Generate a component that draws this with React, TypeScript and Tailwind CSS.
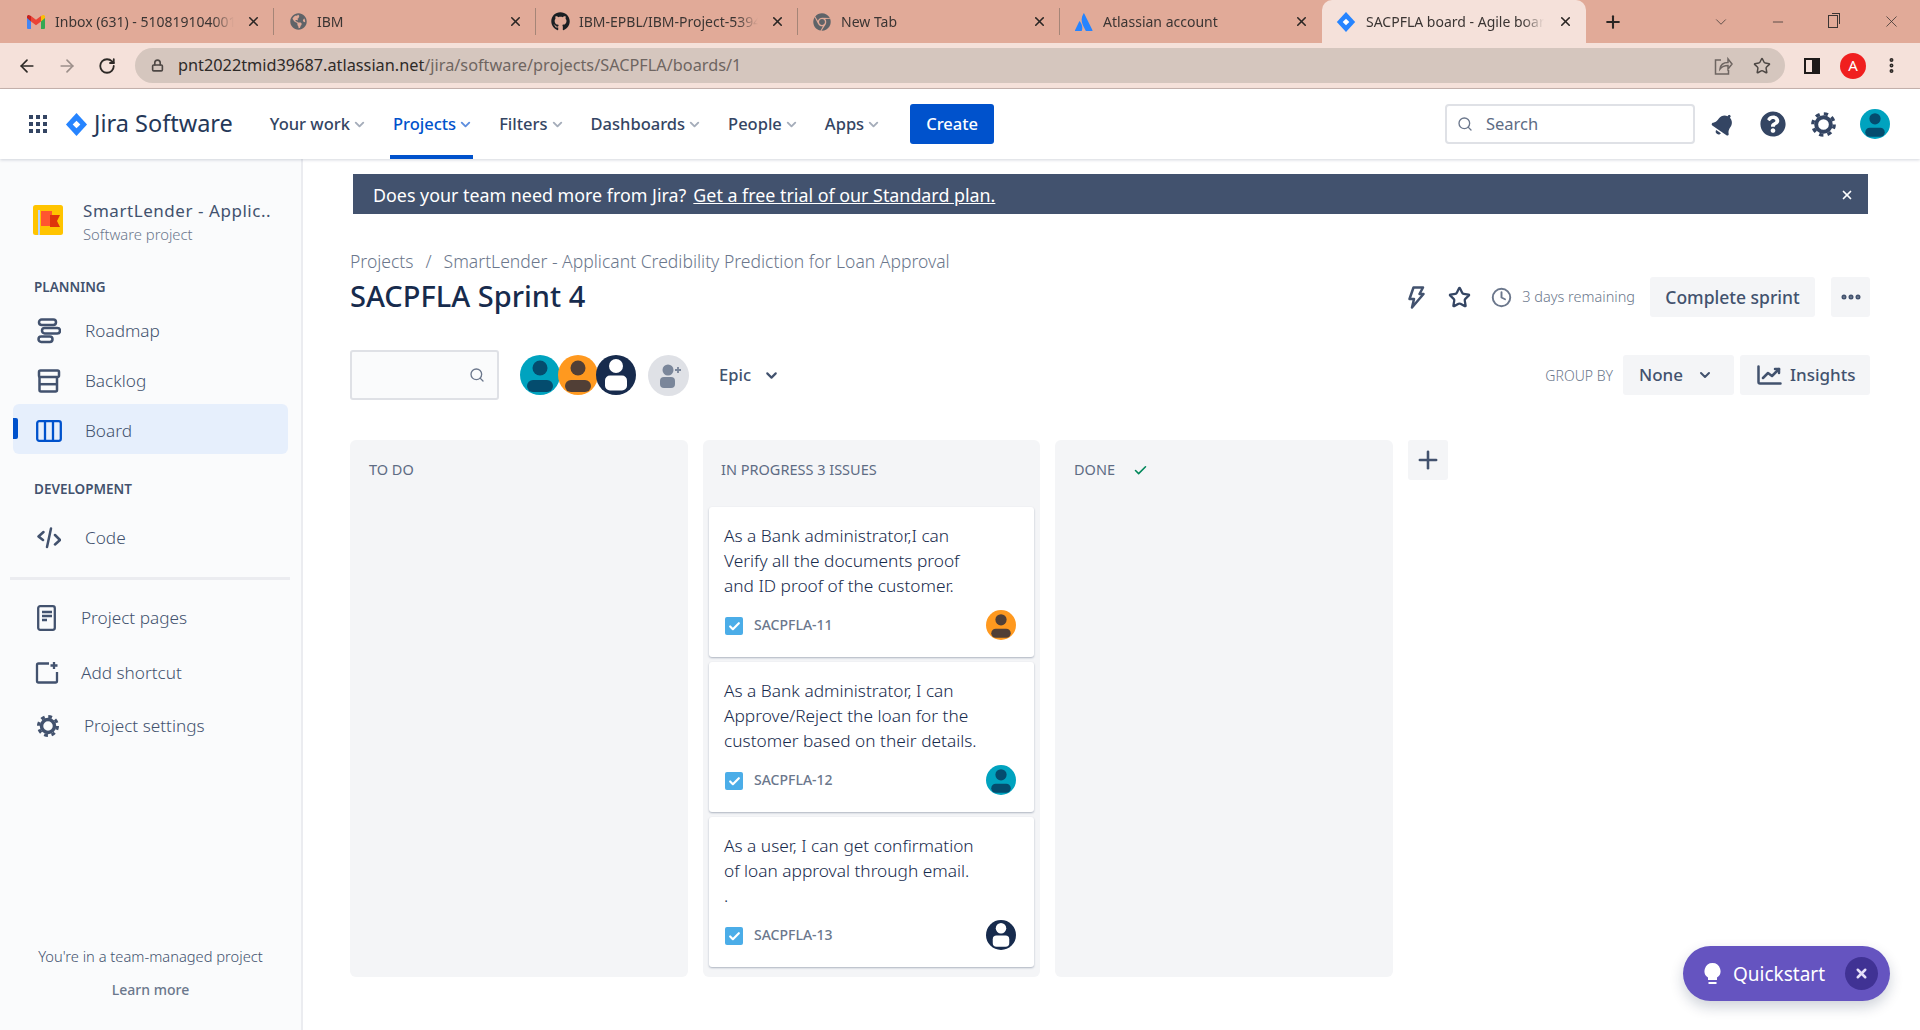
import React from 'react';
import { ArrowLeft, ArrowRight, ChevronDown, Clock, EllipsisVertical, Lock, Minus, MoreHorizontal, Plus, RotateCw, Search, Star, X, Check } from 'lucide-react';
import { FaBell, FaChrome, FaGithub, FaGlobeAmericas, FaQuestionCircle } from 'react-icons/fa';

const font = { fontFamily: '"Noto Sans", "Open Sans", sans-serif' };

const GmailIcon = () => (
  <svg width="18" height="14" viewBox="0 0 18 14">
    <path d="M0 2v11a1 1 0 0 0 1 1h3V6z" fill="#4285f4" />
    <path d="M18 2v11a1 1 0 0 1-1 1h-3V6z" fill="#34a853" />
    <path d="M14 1v5.500L18 3V1.500a1.500 1.500 0 0 0-2.400-1.200z" fill="#fbbc04" />
    <path d="M4 6.500V1l5 3.800L14 1v5.500L9 10.300z" fill="#ea4335" />
    <path d="M0 1.500V3l4 3.500V1L2.400.300A1.500 1.500 0 0 0 0 1.500z" fill="#c5221f" />
  </svg>
);

const AtlassianIcon = () => (
  <svg width="18" height="18" viewBox="0 0 18 18">
    <path d="M5 8.500c-.3-.3-.6-.3-.8.100L0 17.200c-.2.400 0 .8.500.8h5.800c.2 0 .4-.1.500-.3C8 15 7 11 5 8.500z" fill="#2684ff" />
    <path d="M8.500.500C6 4.500 6.200 8.500 8 12.400l2.700 5.300c.1.200.3.300.5.300h5.800c.4 0 .7-.4.500-.8L9.200.500C9 .1 8.700.1 8.500.500z" fill="#2684ff" />
  </svg>
);

const JiraDiamond = ({ size }: { size: number }) => (
  <svg width={size} height={size} viewBox="0 0 24 24">
    <path d="M12 0 23 12 12 24 1 12z" fill="#2684ff" />
    <path d="M12 8l4 4-4 4-4-4z" fill="#ffffff" />
  </svg>
);

const Gear = ({ size, color }: { size: number; color: string }) => (
  <svg width={size} height={size} viewBox="0 0 24 24" fill="none" stroke={color}>
    <circle cx="12" cy="12" r="6.500" strokeWidth="3.500" />
    <circle cx="12" cy="12" r="9.500" strokeWidth="3" strokeDasharray="3.800 3.660" />
  </svg>
);

const Avatar = ({ bg, fg, size }: { bg: string; fg: string; size: number }) => (
  <svg width={size} height={size} viewBox="0 0 40 40">
    <circle cx="20" cy="20" r="20" fill={bg} />
    <circle cx="20" cy="13" r="7.500" fill={fg} />
    <path d="M13 25h14a6 6 0 0 1 6 6v0a6 6 0 0 1-6 6H13a6 6 0 0 1-6-6v0a6 6 0 0 1 6-6z" fill={fg} />
  </svg>
);

const Teal = ({ size = 40 }: { size?: number }) => <Avatar bg="#00a3bf" fg="#044c6e" size={size} />;
const Orange = ({ size = 40 }: { size?: number }) => <Avatar bg="#ff991f" fg="#513f36" size={size} />;
const Navy = ({ size = 40 }: { size?: number }) => (
  <svg width={size} height={size} viewBox="0 0 40 40">
    <circle cx="20" cy="20" r="20" fill="#172b4d" />
    <circle cx="20" cy="11" r="7" fill="#ffffff" />
    <rect x="9" y="20.500" width="22" height="15" rx="5" fill="#ffffff" />
  </svg>
);

const tabs = [
  { title: 'Inbox (631) - 510819104001.', icon: <GmailIcon /> },
  { title: 'IBM', icon: <FaGlobeAmericas size={17} color="#5f6368" /> },
  { title: 'IBM-EPBL/IBM-Project-5394', icon: <FaGithub size={19} color="#1b1f23" /> },
  { title: 'New Tab', icon: <FaChrome size={18} color="#5f6368" /> },
  { title: 'Atlassian account', icon: <AtlassianIcon /> },
];

const navItems = ['Your work', 'Projects', 'Filters', 'Dashboards', 'People', 'Apps'];

const BrowserChrome = () => (
  <>
    <div className="flex h-[43px] items-stretch bg-[#e1aa98] pl-[12px]">
      {tabs.map((tab, i) => (
        <div key={tab.title} className={`relative flex w-[262px] items-center pl-[14px] ${i === 4 ? '' : 'border-r border-[#a58577]'} my-[8px]`}>
          <span className="flex w-[20px] justify-center">{tab.icon}</span>
          <span className="ml-[9px] w-[179px] overflow-hidden whitespace-nowrap text-[14px] text-[#3b3533] [mask-image:linear-gradient(to_right,black_88%,transparent)]">{tab.title}</span>
          <X size={15} strokeWidth={2.500} className="absolute left-[234px] text-[#2a2624]" />
        </div>
      ))}
      <div className="relative flex w-[264px] items-center rounded-t-[10px] bg-[#f5e1da] pl-[14px]">
        <JiraDiamond size={20} />
        <span className="ml-[10px] w-[178px] overflow-hidden whitespace-nowrap text-[14px] text-[#3b3533] [mask-image:linear-gradient(to_right,black_88%,transparent)]">SACPFLA board - Agile board</span>
        <X size={15} strokeWidth={2.500} className="absolute left-[236px] text-[#2a2624]" />
      </div>
      <div className="ml-[17px] flex items-center">
        <Plus size={20} strokeWidth={2.500} className="text-[#2a2624]" />
      </div>
      <div className="ml-auto flex items-center text-[#3b3533]">
        <ChevronDown size={18} strokeWidth={1} />
        <Minus size={16} strokeWidth={1.200} className="ml-[40px]" />
        <span className="relative ml-[42px] h-[13px] w-[10px] border border-[#3b3533] shadow-[2px_-2px_0_-1px_#e1aa98,3px_-3px_0_-1px_#3b3533]" />
        <X size={19} strokeWidth={1} className="ml-[44px] mr-[19px]" />
      </div>
    </div>
    <div className="flex h-[46px] items-center border-b border-[#c9b5ae] bg-[#f5e1da] pl-[17px]">
      <ArrowLeft size={20} className="text-[#2d2926]" />
      <ArrowRight size={20} className="ml-[20px] text-[#9c8f8a]" />
      <RotateCw size={18} strokeWidth={2.400} className="ml-[21px] text-[#2d2926]" />
      <div className="ml-[19px] flex h-[35px] w-[1650px] items-center rounded-full bg-[#d5c6be] pl-[16px]">
        <Lock size={13} strokeWidth={3} className="text-[#4d4744]" />
        <span className="ml-[14px] text-[16.300px]">
          <span className="text-[#2e2a28]">pnt2022tmid39687.atlassian.net</span>
          <span className="text-[#6e6561]">/jira/software/projects/SACPFLA/boards/1</span>
        </span>
        <svg width="20" height="20" viewBox="0 0 20 20" fill="none" stroke="#6e6561" strokeWidth="1.500" className="ml-auto">
          <path d="M8 4H2.500v14h13v-4" />
          <path d="M7 13c.5-4 3.500-6.500 8-6.500V3l4 5-4 5V9.500c-3 0-6 1-8 3.500z" />
        </svg>
        <Star size={18} className="ml-[20px] mr-[14px] text-[#4d4744]" />
      </div>
      <span className="ml-[19px] flex h-[16px] w-[16px] justify-end border-[2.500px] border-[#1d1a19]">
        <span className="h-full w-[6px] bg-[#1d1a19]" />
      </span>
      <span className="ml-[20px] flex h-[26px] w-[26px] items-center justify-center rounded-full bg-[#f01f1f] text-[15px] text-white">A</span>
      <EllipsisVertical size={19} strokeWidth={3} className="ml-[16px] text-[#2d2926]" />
    </div>
  </>
);

const TopNav = () => (
  <div className="relative z-10 flex h-[70px] items-center bg-white pl-[29px] pr-[30px] shadow-[0_1px_3px_rgba(9,30,66,0.18)]">
    <div className="grid h-[18px] w-[18px] grid-cols-3 gap-[3px]">
      {Array.from({ length: 9 }).map((_, i) => (
        <span key={i} className="bg-[#344563]" />
      ))}
    </div>
    <span className="ml-[18px]"><JiraDiamond size={23} /></span>
    <span className="ml-[6px] text-[23.500px] text-[#253858]">Jira Software</span>
    <div className="ml-[37px] flex h-full items-center gap-[26px]">
      {navItems.map((item) => {
        const active = item === 'Projects';
        return (
          <div key={item} className={`relative flex h-full items-center text-[16.500px] font-medium ${active ? 'text-[#0052cc]' : 'text-[#344563]'}`}>
            {item}
            <ChevronDown size={15} strokeWidth={3} className={`ml-[2px] ${active ? 'text-[#5e8ede]' : 'text-[#a5adba]'}`} />
            {active && <span className="absolute bottom-0 left-[-3px] right-0 h-[4px] bg-[#0052cc]" />}
          </div>
        );
      })}
    </div>
    <button className="ml-[29px] h-[40px] w-[84px] rounded-[3px] bg-[#0052cc] text-[16.500px] font-medium text-white">Create</button>
    <div className="ml-auto flex h-[40px] w-[250px] items-center rounded-[4px] border-2 border-[#dfe1e6] pl-[10px]">
      <Search size={16} className="text-[#6b778c]" />
      <span className="ml-[13px] text-[16.500px] text-[#5e6c84]">Search</span>
    </div>
    <FaBell size={23} className="ml-[17px] rotate-[35deg] text-[#344563]" />
    <FaQuestionCircle size={26} className="ml-[25px] text-[#344563]" />
    <span className="ml-[24px]"><Gear size={27} color="#344563" /></span>
    <span className="ml-[23px]"><Teal size={30} /></span>
  </div>
);

const RoadmapIcon = () => (
  <svg width="24" height="26" viewBox="0 0 24 26" fill="none" stroke="#42526e" strokeWidth="2.500">
    <rect x="2" y="1.500" width="17" height="5.500" rx="2.700" />
    <rect x="5" y="10" width="18" height="5.500" rx="2.700" />
    <rect x="1.500" y="18.500" width="14" height="5.500" rx="2.700" />
  </svg>
);

const BacklogIcon = () => (
  <svg width="24" height="24" viewBox="0 0 24 24" fill="none" stroke="#42526e" strokeWidth="2.500">
    <rect x="2" y="1.500" width="20" height="6.500" rx="1.500" />
    <path d="M2.500 8v13a1.500 1.500 0 0 0 1.500 1.500h14.500a1.500 1.500 0 0 0 1.500-1.500V8" />
    <path d="M3 15.200h17" />
  </svg>
);

const BoardIcon = () => (
  <svg width="26" height="22" viewBox="0 0 26 22" fill="none" stroke="#0052cc" strokeWidth="2.300">
    <rect x="1.200" y="1.200" width="23.600" height="19.600" rx="2" />
    <path d="M9 1v20M17 1v20" />
  </svg>
);

const CodeIcon = () => (
  <svg width="24" height="22" viewBox="0 0 24 22" fill="none" stroke="#42526e" strokeWidth="2.500" strokeLinecap="round" strokeLinejoin="round">
    <path d="M6.500 5 1.500 9.500 6 13" />
    <path d="M14 1.500 10 20" />
    <path d="m18 8 5 5-5 4.500" />
  </svg>
);

const PagesIcon = () => (
  <svg width="19" height="26" viewBox="0 0 19 26" fill="none" stroke="#42526e" strokeWidth="2.300">
    <rect x="1.200" y="1.200" width="16.600" height="23.600" rx="2" />
    <path d="M5 7h10M5 11h10M5 15h5" />
  </svg>
);

const ShortcutIcon = () => (
  <svg width="24" height="24" viewBox="0 0 24 24" fill="none" stroke="#42526e" strokeWidth="2.300">
    <path d="M14 2.500H3.500a1.500 1.500 0 0 0-1.500 1.500v16a1.500 1.500 0 0 0 1.500 1.500h17a1.500 1.500 0 0 0 1.500-1.500v-9" />
    <path d="M19 1v7M15.500 4.500h7" />
  </svg>
);

const BoltIcon = () => (
  <svg width="24" height="24" viewBox="0 0 24 24" fill="none" stroke="#42526e" strokeWidth="2.500" strokeLinejoin="round" strokeLinecap="round" className="ml-auto">
    <path d="M9.500 2.500h9.500l-3.500 6.500h4L8 22.500l2-8.500H5.500z" />
  </svg>
);

const FlagIcon = () => (
  <svg width="30" height="30" viewBox="0 0 30 30">
    <rect width="30" height="30" rx="2.500" fill="#ffc400" />
    <rect x="5" y="5" width="2" height="25" fill="#b3d4ff" />
    <path d="M8 6h11v15H8z" fill="#ff5630" />
    <path d="M17 10h10l-3 6 3 6H17z" fill="#de350b" />
  </svg>
);

const Sidebar = () => (
  <aside className="flex w-[303px] shrink-0 flex-col border-r-[2px] border-[#ebecf0] bg-[#fafbfc] pl-[13px]">
    <div className="mt-[46px] flex h-[30px] items-center pl-[20px]">
      <FlagIcon />
      <div className="ml-[20px] pt-[3px]">
        <div className="h-[22px] text-[17px] leading-[22px] tracking-[0.55px] text-[#42526e]">SmartLender - Applic..</div>
        <div className="mt-[2px] h-[20px] text-[14.800px] font-light leading-[20px] text-[#6b778c]">Software project</div>
      </div>
    </div>
    <div className="mt-[42px] h-[20px] pl-[21px] text-[13.500px] font-semibold leading-[20px] text-[#42526e]">PLANNING</div>
    <div className="mt-[7px] flex h-[50px] w-[275px] items-center pl-[24px] pt-[4px] text-[17.200px] font-light text-[#42526e]">
      <RoadmapIcon /><span className="ml-[24px]">Roadmap</span>
    </div>
    <div className="flex h-[50px] w-[275px] items-center pl-[24px] pt-[4px] text-[17.200px] font-light text-[#42526e]">
      <BacklogIcon /><span className="ml-[24px]">Backlog</span>
    </div>
    <div className="relative flex h-[50px] w-[275px] items-center rounded-[6px] bg-[#e6effc] pl-[23px] pt-[3px] text-[17.200px] font-light text-[#42526e]">
      <span className="absolute left-0 top-[14px] h-[21px] w-[5px] rounded-r-[2px] bg-[#0052cc]" />
      <BoardIcon /><span className="ml-[23px]">Board</span>
    </div>
    <div className="mt-[25px] h-[20px] pl-[21px] text-[13.500px] font-semibold leading-[20px] text-[#42526e]">DEVELOPMENT</div>
    <div className="mt-[14px] flex h-[50px] w-[275px] items-center pl-[24px] text-[17.200px] font-light text-[#42526e]">
      <CodeIcon /><span className="ml-[24px]">Code</span>
    </div>
    <div className="ml-[-3px] mt-[14px] h-[3px] w-[280px] bg-[#ebecf0]" />
    <div className="mt-[13px] flex h-[50px] items-center pl-[24px] text-[17.200px] font-light text-[#42526e]">
      <PagesIcon /><span className="ml-[25px]">Project pages</span>
    </div>
    <div className="mt-[5px] flex h-[50px] items-center pl-[22px] text-[17.200px] font-light text-[#42526e]">
      <ShortcutIcon /><span className="ml-[22px]">Add shortcut</span>
    </div>
    <div className="mt-[3px] flex h-[50px] items-center pl-[23px] text-[17.200px] font-light text-[#42526e]">
      <Gear size={24} color="#42526e" /><span className="ml-[24px]">Project settings</span>
    </div>
    <div className="mt-auto w-[275px] pb-[30px] text-center">
      <div className="h-[20px] whitespace-nowrap text-[14.700px] font-light leading-[20px] text-[#42526e]">You're in a team-managed project</div>
      <div className="mt-[14px] h-[20px] text-[14px] font-medium leading-[20px] text-[#6b778c]">Learn more</div>
    </div>
  </aside>
);

const issues = [
  { lines: ['As a Bank administrator,I can', 'Verify all the documents proof', 'and ID proof of the customer.'], key: 'SACPFLA-11', avatar: <Orange size={30} /> },
  { lines: ['As a Bank administrator, I can', 'Approve/Reject the loan for the', 'customer based on their details.'], key: 'SACPFLA-12', avatar: <Teal size={30} /> },
  { lines: ['As a user, I can get confirmation', 'of loan approval through email.', '.'], key: 'SACPFLA-13', avatar: <Navy size={30} /> },
];

const IssueCard = ({ lines, issueKey, avatar }: { lines: string[]; issueKey: string; avatar: React.ReactNode }) => (
  <div className="h-[150px] rounded-[3px] bg-white pl-[15px] pr-[18px] pt-[16px] shadow-[0_1px_2px_rgba(9,30,66,0.3)]">
    {lines.map((line) => (
      <div key={line} className="h-[25px] whitespace-nowrap text-[17.300px] font-light leading-[25px] text-[#172b4d]">{line}</div>
    ))}
    <div className="mt-[12px] flex h-[30px] items-center">
      <span className="ml-[1px] mt-[2px] flex h-[18px] w-[18px] items-center justify-center rounded-[2px] bg-[#4bade8]">
        <Check size={13} strokeWidth={4} className="text-white" />
      </span>
      <span className="ml-[11px] mt-[-2px] text-[14px] font-medium text-[#6b778c]">{issueKey}</span>
      <span className="ml-auto">{avatar}</span>
    </div>
  </div>
);

const Board = () => (
  <main className="flex min-w-0 flex-1 flex-col pl-[47px] pr-[50px]">
    <div className="ml-[3px] mr-[2px] mt-[15px] flex h-[40px] items-center bg-[#42526e] pl-[20px] pr-[14px] pt-[2px] text-[17.850px] text-white">
      Does your team need more from Jira?
      <span className="ml-[7px] underline">Get a free trial of our Standard plan.</span>
      <X size={14} strokeWidth={3} className="ml-auto" />
    </div>
    <div className="mt-[35px] h-[24px] text-[17.550px] font-light leading-[24px] text-[#6b778c]">
      Projects<span className="mx-[12px]">/</span>SmartLender - Applicant Credibility Prediction for Loan Approval
    </div>
    <div className="mt-[4px] flex h-[40px] items-center">
      <h1 className="mt-[-2px] text-[29px] font-medium text-[#172b4d]">SACPFLA Sprint 4</h1>
      <BoltIcon />
      <Star size={23} strokeWidth={2.400} className="ml-[20px] text-[#344563]" />
      <Clock size={21} strokeWidth={2.200} className="ml-[20px] text-[#6b778c]" />
      <span className="ml-[10px] text-[14.500px] font-light text-[#6b778c]">3 days remaining</span>
      <button className="ml-[15px] h-[40px] w-[165px] rounded-[3px] bg-[#f4f5f7] text-[17.500px] font-medium text-[#42526e]">Complete sprint</button>
      <button className="ml-[16px] flex h-[40px] w-[39px] items-center justify-center rounded-[3px] bg-[#f4f5f7] text-[#42526e]">
        <MoreHorizontal size={24} strokeWidth={3} />
      </button>
    </div>
    <div className="mt-[33px] flex h-[50px] items-center">
      <div className="flex h-[50px] w-[149px] items-center justify-end rounded-[3px] border-2 border-[#dfe1e6] bg-[#fafbfc] pr-[12px]">
        <Search size={16} className="text-[#6b778c]" />
      </div>
      <span className="ml-[21px]"><Teal /></span>
      <span className="ml-[-2px]"><Orange /></span>
      <span className="ml-[-2px]"><Navy /></span>
      <svg width="41" height="41" viewBox="0 0 41 41" className="ml-[12px]">
        <circle cx="20.500" cy="20.500" r="20.500" fill="#dfe1e6" />
        <circle cx="20" cy="15" r="5.500" fill="#7a869a" />
        <rect x="12" y="22" width="15" height="11" rx="4" fill="#7a869a" />
        <path d="M27 15h6M30 12v6" stroke="#7a869a" strokeWidth="1.800" />
      </svg>
      <span className="ml-[30px] text-[16.500px] font-medium text-[#42526e]">Epic</span>
      <ChevronDown size={17} strokeWidth={3} className="ml-[12px] text-[#42526e]" />
      <span className="ml-auto text-[14px] font-light text-[#6b778c]">GROUP BY</span>
      <button className="ml-[10px] flex h-[40px] w-[111px] items-center rounded-[3px] bg-[#f4f5f7] pl-[16px] text-[17px] font-medium text-[#42526e]">
        None<ChevronDown size={16} strokeWidth={3} className="ml-[14px]" />
      </button>
      <button className="ml-[6px] flex h-[40px] w-[130px] items-center rounded-[3px] bg-[#f4f5f7] pl-[17px] text-[17px] font-medium text-[#42526e]">
        <svg width="25" height="20" viewBox="0 0 25 20" fill="none" stroke="#42526e" strokeWidth="2.500" strokeLinecap="round" strokeLinejoin="round">
          <path d="M1.500 1.500v15.500a1.500 1.500 0 0 0 1.500 1.500h20.500" />
          <path d="m6 13 5-5 4 3 7-7" />
          <path d="M18 4h4v4" />
        </svg>
        <span className="ml-[8px]">Insights</span>
      </button>
    </div>
    <div className="mt-[40px] flex items-start gap-[15px]">
      <section className="h-[537px] w-[338px] rounded-[6px] bg-[#f4f5f7] pl-[19px] pt-[19px]">
        <div className="text-[14.500px] leading-[20px] text-[#5e6c84]">TO DO</div>
      </section>
      <section className="h-[537px] w-[337px] rounded-[6px] bg-[#f4f5f7] px-[6px] pt-[19px]">
        <div className="pl-[12px] text-[14.500px] leading-[20px] text-[#5e6c84]">IN PROGRESS 3 ISSUES</div>
        <div className="mt-[28px] flex flex-col gap-[5px]">
          {issues.map((issue) => (
            <IssueCard key={issue.key} lines={issue.lines} issueKey={issue.key} avatar={issue.avatar} />
          ))}
        </div>
      </section>
      <section className="flex h-[537px] w-[338px] items-start rounded-[6px] bg-[#f4f5f7] pl-[19px] pt-[19px]">
        <span className="text-[14.500px] leading-[20px] text-[#5e6c84]">DONE</span>
        <Check size={15} strokeWidth={2.500} className="ml-[18px] mt-[4px] text-[#00875a]" />
      </section>
      <button className="flex h-[40px] w-[40px] items-center justify-center rounded-[3px] bg-[#f4f5f7] text-[#42526e]">
        <Plus size={28} strokeWidth={2.200} />
      </button>
    </div>
  </main>
);

const App = () => (
  <div className="relative flex h-[1030px] w-[1920px] flex-col overflow-hidden bg-white" style={font}>
    <BrowserChrome />
    <TopNav />
    <div className="flex min-h-0 flex-1">
      <Sidebar />
      <Board />
    </div>
    <div className="absolute left-[1683px] top-[946px] flex h-[55px] w-[207px] items-center rounded-full bg-[#6554c0] pl-[21px] text-white shadow-[0_6px_14px_rgba(9,30,66,0.2)]">
      <svg width="17" height="22" viewBox="0 0 17 22" fill="#ffffff">
        <path d="M8.500 0a8 8 0 0 0-4.500 14.600V17h9v-2.400A8 8 0 0 0 8.500 0z" />
        <rect x="4.500" y="19" width="8" height="2" />
      </svg>
      <span className="ml-[12px] pt-[2px] text-[19px]">Quickstart</span>
      <span className="absolute right-[12px] flex h-[33px] w-[33px] items-center justify-center rounded-full bg-[#403294]">
        <X size={15} strokeWidth={4} className="text-[#e6e0f8]" />
      </span>
    </div>
  </div>
);

export default App;
